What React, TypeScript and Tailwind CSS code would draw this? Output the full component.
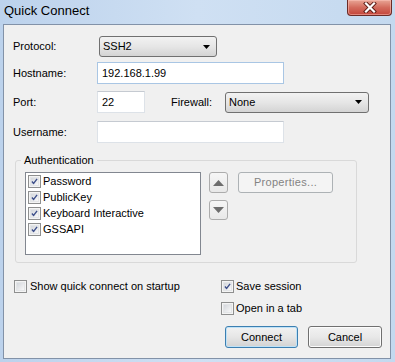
import React from "react";

const font = "font-['Liberation_Sans',Arial,sans-serif]";

function Check({ checked }: { checked: boolean }) {
  return (
    <div className="w-[13px] h-[13px] shrink-0 border border-[#8e8f8f] bg-[#f4f4f4] flex items-center justify-center">
      <div className="w-[9px] h-[9px] bg-gradient-to-br from-[#d4d7dc] to-[#f8f8f8] border border-[#e3e5e7] flex items-center justify-center">
        {checked && (
          <svg width="9" height="9" viewBox="0 0 9 9">
            <path d="M1.2 4.6 L3.4 7 L7.8 1.2" fill="none" stroke="#3d4f8a" strokeWidth="1.8" strokeLinejoin="round" />
          </svg>
        )}
      </div>
    </div>
  );
}

function Arrow() {
  return (
    <svg width="7" height="4" viewBox="0 0 7 4">
      <path d="M0 0 H7 L3.5 4 Z" fill="#000" />
    </svg>
  );
}

function Select({ value, width }: { value: string; width: string }) {
  return (
    <div
      className={`${width} h-[21px] rounded-[3px] border border-[#707070] bg-gradient-to-b from-[#f2f2f2] via-[#e6e6e6] to-[#d4d4d4] flex items-center pl-[3px] pr-[6px] text-[11px] text-black`}
    >
      <span className="flex-1">{value}</span>
      <Arrow />
    </div>
  );
}

function Input({ value, width, focus }: { value?: string; width: string; focus?: boolean }) {
  return (
    <div
      className={`${width} h-[22px] bg-white border ${
        focus ? "border-[#a9c6e4]" : "border-[#dde2e8] border-t-[#c5cad1]"
      } flex items-center pl-[4px] text-[11px] text-black`}
    >
      {value}
    </div>
  );
}

export default function App() {
  return (
    <div className={`${font} w-[395px] h-[362px] bg-gradient-to-r from-[#bcd2ec] via-[#cfe0f3] to-[#c4d9ef] flex flex-col overflow-hidden`}>
      {/* title bar */}
      <div className="h-[24px] flex items-start relative">
        <span className="ml-[4px] mt-[2px] text-[13px] text-black leading-[18px]">Quick Connect</span>
        <div className="absolute left-[347px] top-0 w-[45px] h-[16px] rounded-b-[4px] border border-t-0 border-[#6b2b26] bg-gradient-to-b from-[#e8a596] via-[#d36b5d] to-[#c3443a] flex items-center justify-center shadow-[inset_0_0_0_1px_rgba(255,200,190,0.5)]">
          <svg width="14" height="11" viewBox="0 0 14 11">
            <path d="M3 1.5 L11 9.5 M11 1.5 L3 9.5" stroke="#5a1a14" strokeWidth="4" strokeLinecap="square" />
            <path d="M3 1.5 L11 9.5 M11 1.5 L3 9.5" stroke="#ffffff" strokeWidth="2.2" strokeLinecap="square" />
          </svg>
        </div>
      </div>

      {/* client */}
      <div className="ml-[3px] mr-[4px] h-[335px] border border-[#8292a8] bg-[#f0f0f0] flex flex-col text-[11px] text-black">
        {/* Protocol */}
        <div className="mt-[11px] h-[21px] flex items-center">
          <span className="ml-[9px] w-[86px]">Protocol:</span>
          <Select value="SSH2" width="w-[118px]" />
        </div>
        {/* Hostname */}
        <div className="mt-[5px] h-[22px] flex items-center">
          <span className="ml-[9px] w-[84px]">Hostname:</span>
          <Input value="192.168.1.99" width="w-[187px]" focus />
        </div>
        {/* Port / Firewall */}
        <div className="mt-[7px] h-[22px] flex items-center">
          <span className="ml-[9px] w-[84px]">Port:</span>
          <Input value="22" width="w-[48px]" />
          <span className="ml-[26px] w-[54px]">Firewall:</span>
          <Select value="None" width="w-[144px]" />
        </div>
        {/* Username */}
        <div className="mt-[8px] h-[22px] flex items-center">
          <span className="ml-[9px] w-[84px]">Username:</span>
          <Input width="w-[187px]" />
        </div>

        {/* Authentication group */}
        <div className="relative mt-[17px] ml-[11px] w-[342px] h-[103px] border border-[#d9d9d9] rounded-[3px] flex items-start pt-[11px] pl-[9px]">
          <span className="absolute left-[5px] top-[-8px] px-[3px] bg-[#f0f0f0] leading-[14px]">Authentication</span>
          <div className="w-[176px] h-[83px] bg-white border border-[#828790] flex flex-col pl-[2px]">
            {["Password", "PublicKey", "Keyboard Interactive", "GSSAPI"].map((t) => (
              <div key={t} className="h-[16px] flex items-center gap-[2px]">
                <Check checked />
                <span>{t}</span>
              </div>
            ))}
          </div>
          <div className="ml-[8px] flex flex-col gap-[7px]">
            <div className="w-[19px] h-[21px] rounded-[3px] border border-[#acacac] bg-gradient-to-b from-[#f6f6f6] to-[#e8e8e8] flex items-center justify-center">
              <svg width="11" height="6" viewBox="0 0 11 6">
                <path d="M0 6 L5.5 0 L11 6 Z" fill="#6d6d6d" />
              </svg>
            </div>
            <div className="w-[19px] h-[20px] rounded-[3px] border border-[#acacac] bg-gradient-to-b from-[#f6f6f6] to-[#e8e8e8] flex items-center justify-center">
              <svg width="11" height="6" viewBox="0 0 11 6">
                <path d="M0 0 L11 0 L5.5 6 Z" fill="#6d6d6d" />
              </svg>
            </div>
          </div>
          <div className="ml-[10px] w-[95px] h-[21px] rounded-[3px] border border-[#adb2b5] bg-[#f4f4f4] flex items-center justify-center text-[#838383] tracking-[0.3px]">
            Properties...
          </div>
        </div>

        {/* bottom options */}
        <div className="mt-[16px] flex">
          <div className="ml-[10px] w-[207px] h-[14px] flex items-center gap-[3px]">
            <Check checked={false} />
            <span>Show quick connect on startup</span>
          </div>
          <div className="flex flex-col gap-[8px]">
            <div className="h-[14px] flex items-center gap-[2px]">
              <Check checked />
              <span>Save session</span>
            </div>
            <div className="h-[14px] flex items-center gap-[2px]">
              <Check checked={false} />
              <span>Open in a tab</span>
            </div>
          </div>
        </div>

        {/* buttons */}
        <div className="mt-[11px] flex ml-[221px] gap-[10px]">
          <div className="w-[73px] h-[22px] rounded-[3px] border border-[#3c7fb1] bg-gradient-to-b from-[#f2f2f2] via-[#e6e6e6] to-[#d2d2d2] flex items-center justify-center shadow-[inset_0_0_0_1px_#bfe2f7]">
            Connect
          </div>
          <div className="w-[74px] h-[22px] rounded-[3px] border border-[#707070] bg-gradient-to-b from-[#f2f2f2] via-[#e8e8e8] to-[#d4d4d4] flex items-center justify-center shadow-[inset_0_0_0_1px_#fcfcfc]">
            Cancel
          </div>
        </div>
      </div>
    </div>
  );
}
